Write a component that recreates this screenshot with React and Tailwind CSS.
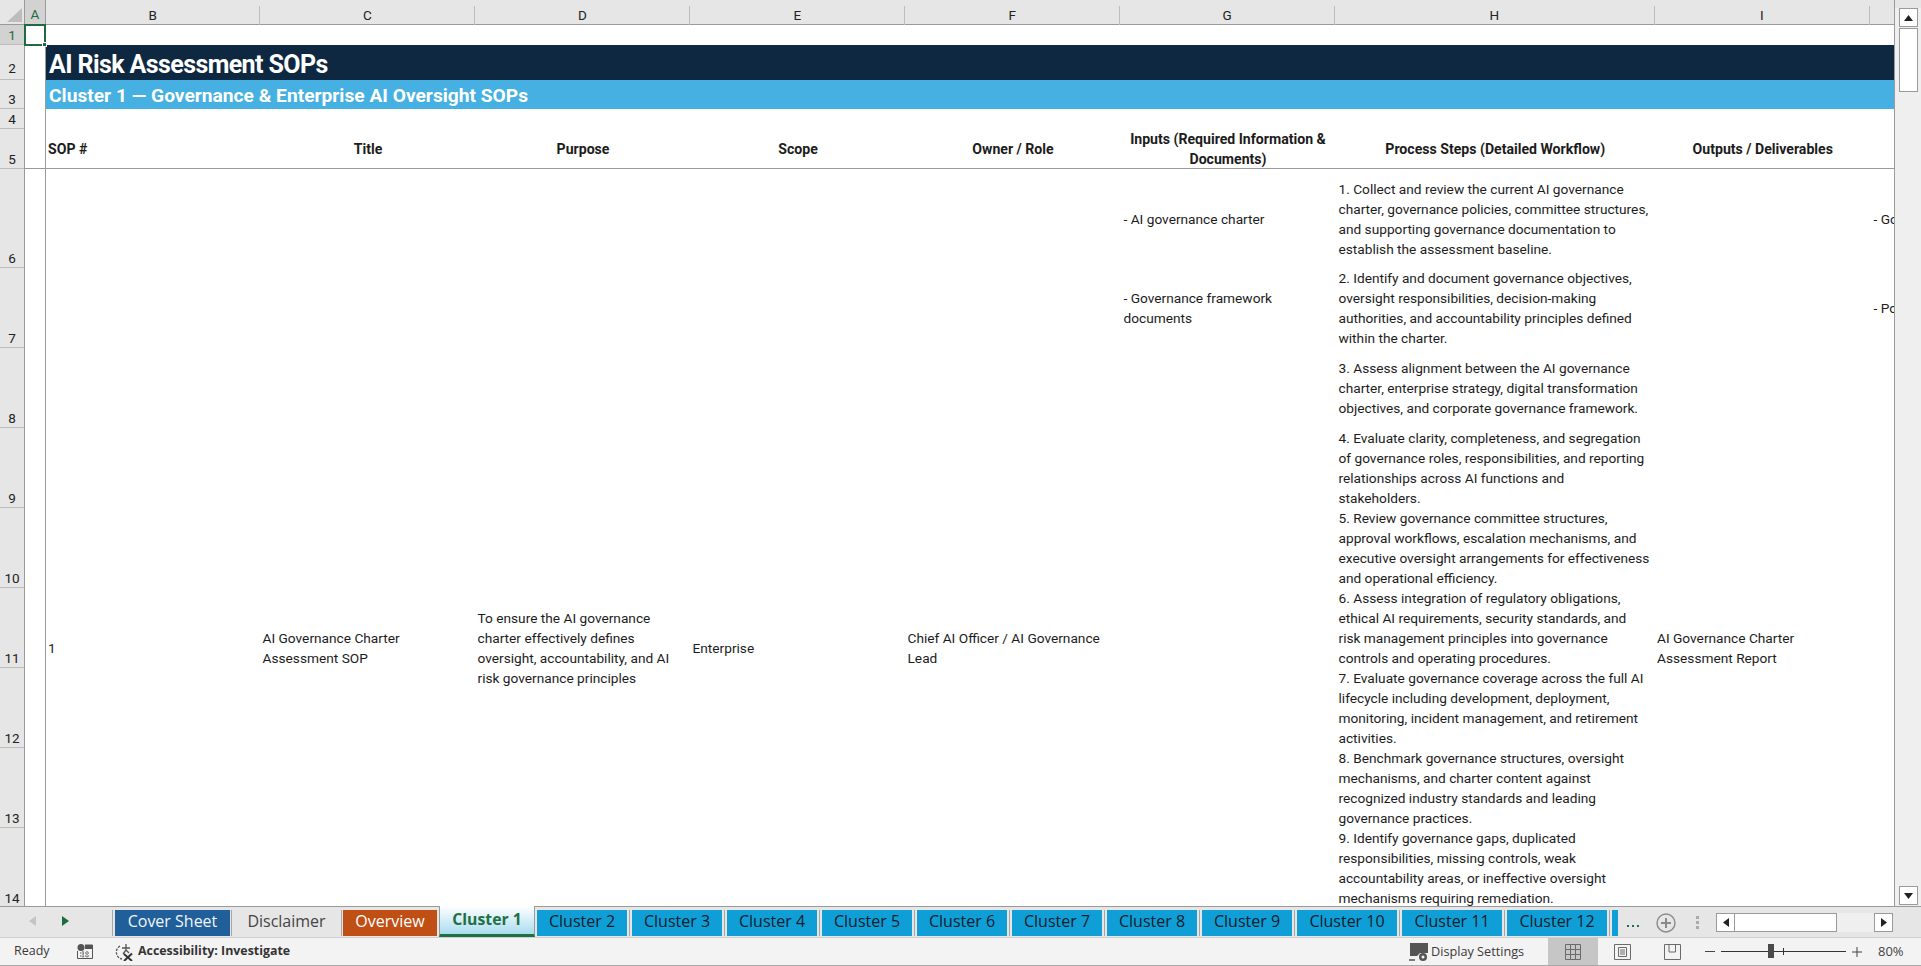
import React from 'react';

const body = '"Roboto", "Liberation Sans", sans-serif';

const columns = [
  { name: 'B', w: 'w-[214.5px]' },
  { name: 'C', w: 'w-[215px]' },
  { name: 'D', w: 'w-[215px]' },
  { name: 'E', w: 'w-[215px]' },
  { name: 'F', w: 'w-[215px]' },
  { name: 'G', w: 'w-[215px]' },
  { name: 'H', w: 'w-[319.5px]' },
  { name: 'I', w: 'w-[215.5px]' },
  { name: '', w: 'w-[24px]' },
];

const rows = [
  { n: 1, h: 'h-[20px]' },
  { n: 2, h: 'h-[35px] pb-[2px]' },
  { n: 3, h: 'h-[29px]' },
  { n: 4, h: 'h-[20px]' },
  { n: 5, h: 'h-[40px]' },
  { n: 6, h: 'h-[99px]' },
  { n: 7, h: 'h-[80px]' },
  { n: 8, h: 'h-[80px]' },
  { n: 9, h: 'h-[80px]' },
  { n: 10, h: 'h-[80px]' },
  { n: 11, h: 'h-[80px]' },
  { n: 12, h: 'h-[80px]' },
  { n: 13, h: 'h-[80px]' },
  { n: 14, h: 'h-[80px]' },
];

const steps = [
  ['1. Collect and review the current AI governance', 'charter, governance policies, committee structures,', 'and supporting governance documentation to', 'establish the assessment baseline.'],
  ['2. Identify and document governance objectives,', 'oversight responsibilities, decision-making', 'authorities, and accountability principles defined', 'within the charter.'],
  ['3. Assess alignment between the AI governance', 'charter, enterprise strategy, digital transformation', 'objectives, and corporate governance framework.'],
  ['4. Evaluate clarity, completeness, and segregation', 'of governance roles, responsibilities, and reporting', 'relationships across AI functions and', 'stakeholders.'],
  ['5. Review governance committee structures,', 'approval workflows, escalation mechanisms, and', 'executive oversight arrangements for effectiveness', 'and operational efficiency.'],
  ['6. Assess integration of regulatory obligations,', 'ethical AI requirements, security standards, and', 'risk management principles into governance', 'controls and operating procedures.'],
  ['7. Evaluate governance coverage across the full AI', 'lifecycle including development, deployment,', 'monitoring, incident management, and retirement', 'activities.'],
  ['8. Benchmark governance structures, oversight', 'mechanisms, and charter content against', 'recognized industry standards and leading', 'governance practices.'],
  ['9. Identify governance gaps, duplicated', 'responsibilities, missing controls, weak', 'accountability areas, or ineffective oversight', 'mechanisms requiring remediation.'],
];

const clusterTabs = [
  ['Cluster 2', 'w-[90px]'],
  ['Cluster 3', 'w-[90px]'],
  ['Cluster 4', 'w-[90px]'],
  ['Cluster 5', 'w-[90px]'],
  ['Cluster 6', 'w-[90px]'],
  ['Cluster 7', 'w-[90px]'],
  ['Cluster 8', 'w-[90px]'],
  ['Cluster 9', 'w-[90px]'],
  ['Cluster 10', 'w-[100px]'],
  ['Cluster 11', 'w-[100px]'],
  ['Cluster 12', 'w-[100px]'],
];

const Lines = ({ lines }) => (
  <div>
    {lines.map(line => (
      <div key={line} className="whitespace-nowrap">{line}</div>
    ))}
  </div>
);

const Sep = ({ tight }) => <div className={`w-px h-[26px] bg-[#a6a6a6] ${tight ? 'mx-[1px]' : 'mx-[2px]'}`} />;

const Merged = ({ lines, w }) => (
  <div className={`${w} row-span-10 flex items-center pl-[2px]`}>
    <Lines lines={lines} />
  </div>
);

const Scrollbar = () => (
  <div className="w-[26px] h-[906px] flex flex-col items-center bg-[#efefef]">
    <div className="w-full h-[8px] bg-[#e6e6e6]" />
    <div className="w-[19px] h-[19px] bg-white border border-[#9a9a9a] flex items-center justify-center">
      <svg width="9" height="6" viewBox="0 0 9 6"><path d="M4.5 0 L9 6 L0 6 Z" fill="#222" /></svg>
    </div>
    <div className="w-[19px] h-[64px] mt-[1px] bg-white border border-[#9a9a9a]" />
    <div className="flex-1" />
    <div className="w-[19px] h-[19px] flex items-center justify-center bg-white border border-[#9a9a9a] mb-[1px]">
      <svg width="9" height="6" viewBox="0 0 9 6"><path d="M0 0 L9 0 L4.5 6 Z" fill="#222" /></svg>
    </div>
  </div>
);

const Sheet = () => (
  <div className="w-[1895px] h-[906px] flex flex-col border-r border-[#9a9a9a] overflow-hidden">
    {/* column letters */}
    <div className="flex h-[25px] shrink-0 bg-[#e6e6e6] border-b border-[#9a9a9a] text-[13.5px] text-[#222]">
      <div className="w-[25px] flex items-end justify-end p-[2px] border-r border-[#9a9a9a]">
        <svg width="15" height="14" viewBox="0 0 15 14"><path d="M15 0 V14 H0 Z" fill="#bdbdbd" /></svg>
      </div>
      <div className="w-[21px] flex items-center justify-center bg-[#d2d2d2] border-r border-[#9a9a9a] pt-[4px] text-[#1e6b41]">A</div>
      {columns.map(c => (
        <div key={c.name} className={`${c.w} h-[19px] mt-[6px] flex items-center justify-center border-r border-[#bdbdbd] last:border-r-0`}>{c.name}</div>
      ))}
    </div>

    <div className="flex flex-1 min-h-0">
      {/* row numbers */}
      <div className="w-[25px] shrink-0 bg-[#e6e6e6] border-r border-[#9a9a9a] text-[13.5px] text-[#222]">
        {rows.map(r => (
          <div key={r.n} className={`${r.h} flex items-end justify-center leading-[18px] border-b border-[#bdbdbd] ${r.n === 1 ? 'bg-[#d2d2d2] text-[#1e6b41]' : ''}`}>{r.n}</div>
        ))}
      </div>

      {/* column A with the selected cell */}
      <div className="relative w-[21px] shrink-0 border-r border-[#9a9a9a]">
        <div className="absolute -left-px top-[-1px] w-[22px] h-[22px] border-2 border-[#1e6b41]" />
        <div className="absolute left-[17px] top-[17px] w-[5px] h-[5px] bg-[#1e6b41] border border-white" />
        <div className="absolute left-0 right-0 top-[143px] h-px bg-[#9a9a9a]" />
      </div>

      <div className="flex-1 min-w-0 overflow-hidden text-[13.7px] leading-[20px] text-[#1c1c1c]">
        <div className="h-[20px]" />
        <div className="h-[35px] flex items-center bg-[#0e2841] pl-[3px] pt-[4px] text-white text-[25px] font-bold whitespace-nowrap tracking-[-0.6px]">AI Risk Assessment SOPs</div>
        <div className="h-[29px] flex items-center bg-[#45b0e1] pl-[3px] pt-[2px] text-white text-[19.2px] font-bold whitespace-nowrap">Cluster 1 — Governance &amp; Enterprise AI Oversight SOPs</div>
        <div className="h-[20px]" />

        {/* table header */}
        <div className="flex h-[40px] border-b border-[#9a9a9a] font-bold text-[14.1px]">
          <div className="w-[214.5px] flex items-center pl-[2px]">SOP #</div>
          <div className="w-[215px] flex items-center justify-center">Title</div>
          <div className="w-[215px] flex items-center justify-center">Purpose</div>
          <div className="w-[215px] flex items-center justify-center">Scope</div>
          <div className="w-[215px] flex items-center justify-center">Owner / Role</div>
          <div className="w-[215px] flex items-center justify-center text-center">
            <Lines lines={['Inputs (Required Information &', 'Documents)']} />
          </div>
          <div className="w-[319.5px] flex items-center justify-center">Process Steps (Detailed Workflow)</div>
          <div className="w-[215.5px] flex items-center justify-center">Outputs / Deliverables</div>
        </div>

        {/* SOP row */}
        <div className="grid w-[1848px] grid-cols-[214.5px_215px_215px_215px_215px_215px_319.5px_215.5px_24px] grid-rows-[99px_repeat(8,80px)_218px] overflow-hidden">
          <Merged lines={['1']} />
          <Merged lines={['AI Governance Charter', 'Assessment SOP']} />
          <Merged lines={['To ensure the AI governance', 'charter effectively defines', 'oversight, accountability, and AI', 'risk governance principles']} />
          <Merged lines={['Enterprise']} />
          <Merged lines={['Chief AI Officer / AI Governance', 'Lead']} />
          <div className="flex items-center pl-[3px]">- AI governance charter</div>
          <div className="flex items-center pl-[3px]"><Lines lines={steps[0]} /></div>
          <Merged lines={['AI Governance Charter', 'Assessment Report']} />
          <div className="flex items-center pl-[3px] whitespace-nowrap">- Go</div>

          <div className="flex items-center pl-[3px]"><Lines lines={['- Governance framework', 'documents']} /></div>
          <div className="flex items-center pl-[3px]"><Lines lines={steps[1]} /></div>
          <div className="flex items-center pl-[3px] whitespace-nowrap">- Po</div>

          {steps.slice(2).map(step => (
            <React.Fragment key={step[0]}>
              <div />
              <div className="flex items-center pl-[3px]"><Lines lines={step} /></div>
              <div />
            </React.Fragment>
          ))}
        </div>
      </div>
    </div>
  </div>
);

const Tab = ({ label, className }) => (
  <div className={`h-[26px] pb-[5px] flex items-center justify-center whitespace-nowrap ${className}`}>{label}</div>
);

const TabStrip = () => (
  <div className="h-[32px] shrink-0 flex items-start bg-[#e6e6e6] border-t border-[#9a9a9a] border-b border-b-[#cfcfcf] text-[16px]" style={{ fontFamily: '"Open Sans", sans-serif' }}>
    <div className="w-[110px] h-[28px] flex items-center">
      <svg className="ml-[29px]" width="7" height="10" viewBox="0 0 7 10"><path d="M7 0 V10 L0 5 Z" fill="#c4c4c4" /></svg>
      <svg className="ml-[26px]" width="7" height="10" viewBox="0 0 7 10"><path d="M0 0 V10 L7 5 Z" fill="#1e6b41" /></svg>
    </div>
    <div className="flex items-center mt-[2px]">
      <Sep />
      <Tab label="Cover Sheet" className="w-[115px] bg-[#215f9a] text-[#f2f6fa]" />
      <Sep tight />
      <Tab label="Disclaimer" className="w-[107px] text-[#444]" />
      <Sep tight />
      <Tab label="Overview" className="w-[94px] bg-[#c04f15] text-white" />
      <div className="w-[96px] mx-[2px] -mt-[3px] h-[31px] pb-[1px] flex items-center justify-center border-l border-r border-[#9a9a9a] border-b-[3px] border-b-[#1e7145] bg-gradient-to-b from-white to-[#a9dcef] text-[#1e7145] font-bold text-[15.8px]">Cluster 1</div>
      {clusterTabs.map(([label, w], i) => (
        <React.Fragment key={label}>
          {i > 0 && <Sep />}
          <Tab label={label} className={`${w} bg-[#0f9ed5] text-[#10202c]`} />
        </React.Fragment>
      ))}
      <Sep />
      <div className="w-[6px] h-[26px] bg-[#0f9ed5]" />
    </div>
    <div className="w-[29px] mt-[9px] ml-[9px] flex gap-[3px]">
      <span className="w-[2px] h-[2px] mt-[9px] bg-[#1e7145]" />
      <span className="w-[2px] h-[2px] mt-[9px] bg-[#1e7145]" />
      <span className="w-[2px] h-[2px] mt-[9px] bg-[#1e7145]" />
    </div>
    <svg className="mt-[6px]" width="20" height="20" viewBox="0 0 20 20" fill="none" stroke="#8a8a8a" strokeWidth="1.4">
      <circle cx="10" cy="10" r="9" />
      <path d="M10 5 V15 M5 10 H15" strokeWidth="2" />
    </svg>
    <div className="ml-[20px] mt-[9px] flex flex-col gap-[2px]">
      <span className="w-[3px] h-[3px] bg-[#ababab]" />
      <span className="w-[3px] h-[3px] bg-[#ababab]" />
      <span className="w-[3px] h-[3px] bg-[#ababab]" />
    </div>
    <div className="ml-[17px] mt-[6px] flex h-[19px] w-[177px]">
      <div className="w-[19px] bg-white border border-[#9a9a9a] flex items-center justify-center">
        <svg width="6" height="9" viewBox="0 0 6 9"><path d="M6 0 V9 L0 4.5 Z" fill="#222" /></svg>
      </div>
      <div className="w-[102px] bg-white border border-l-0 border-[#9a9a9a]" />
      <div className="flex-1 bg-[#efefef]" />
      <div className="w-[19px] bg-white border border-[#9a9a9a] flex items-center justify-center">
        <svg width="6" height="9" viewBox="0 0 6 9"><path d="M0 0 V9 L6 4.5 Z" fill="#222" /></svg>
      </div>
    </div>
  </div>
);

const StatusBar = () => (
  <div className="flex-1 flex items-center bg-[#f3f3f3] border-b border-[#a8a8a8] text-[13px] text-[#3a3a3a]" style={{ fontFamily: '"Open Sans", sans-serif' }}>
    <span className="ml-[14px] w-[36px] text-[12.5px]">Ready</span>
    <svg className="ml-[27px]" width="16" height="15" viewBox="0 0 16 15">
      <circle cx="4" cy="3.5" r="3.5" fill="#555" />
      <path d="M8 1 H15.5 V14.5 H0.5 V7" fill="none" stroke="#555" />
      <path d="M8 1 H15.5 V5 H8 Z" fill="#555" />
      <path d="M3 9 H13 M3 12 H13 M6 7 V14 M10 7 V14" stroke="#555" strokeDasharray="1.5 1" />
    </svg>
    <svg className="ml-[21px]" width="20" height="18" viewBox="0 0 20 18" fill="none" stroke="#555" strokeWidth="1.3">
      <path d="M6 3 A7 7 0 0 0 8 16" strokeDasharray="2.5 1.2" />
      <path d="M12 1 V7 M8 5 H16 M12 7 L9 11 M12 7 L15 10" />
      <path d="M10 11 L18 18 M18 10.5 L10 18" strokeWidth="2" stroke="#333" />
    </svg>
    <span className="ml-[4px] font-bold text-[12.4px] text-[#333] whitespace-nowrap">Accessibility: Investigate</span>

    <div className="flex-1" />

    <svg width="20" height="20" viewBox="0 0 20 20">
      <path d="M1 1 H19 V11 H11 L8 14 H1 Z" fill="#555" />
      <path d="M0 18 H6" stroke="#555" strokeWidth="1.5" />
      <circle cx="14" cy="15" r="4" fill="#555" />
      <circle cx="14" cy="15" r="1.5" fill="#f3f3f3" />
    </svg>
    <span className="ml-[2px] w-[117px] text-[12.7px] whitespace-nowrap">Display Settings</span>
    <div className="w-[50px] h-[27px] bg-[#c6c6c6] flex items-center justify-center">
      <svg width="16" height="16" viewBox="0 0 16 16" fill="none" stroke="#6a6a6a">
        <path d="M.5 .5 H15.5 V15.5 H.5 Z M5.5 .5 V15.5 M10.5 .5 V15.5 M.5 5.5 H15.5 M.5 10.5 H15.5" />
      </svg>
    </div>
    <svg className="ml-[16px]" width="17" height="16" viewBox="0 0 17 16" fill="none" stroke="#6a6a6a">
      <path d="M.5 .5 H16.5 V15.5 H.5 Z M4.5 3.5 H12.5 V12.5 H4.5 Z M6 6 H11 M6 8 H11 M6 10 H11" />
    </svg>
    <svg className="ml-[33px]" width="17" height="16" viewBox="0 0 17 16" fill="none" stroke="#6a6a6a">
      <path d="M.5 .5 H16.5 V15.5 H.5 Z M5 .5 V8 H11.5 V.5" />
    </svg>
    <div className="ml-[24px] w-[10px] h-px bg-[#444]" />
    <div className="ml-[6px] w-[125px] h-px bg-[#333] relative">
      <div className="absolute left-[47px] top-[-7px] w-[6px] h-[14px] bg-[#4a4a4a]" />
      <div className="absolute left-[62px] top-[-3px] w-px h-[7px] bg-[#333]" />
    </div>
    <svg className="ml-[6px]" width="10" height="10" viewBox="0 0 10 10" stroke="#444">
      <path d="M0 5 H10 M5 0 V10" />
    </svg>
    <span className="ml-[16px] w-[43px] text-[#444]">80%</span>
  </div>
);

export default function App() {
  return (
    <div className="w-[1921px] h-[966px] flex flex-col bg-white overflow-hidden" style={{ fontFamily: body }}>
      <div className="flex shrink-0 h-[906px]">
        <Sheet />
        <Scrollbar />
      </div>
      <TabStrip />
      <StatusBar />
    </div>
  );
}
